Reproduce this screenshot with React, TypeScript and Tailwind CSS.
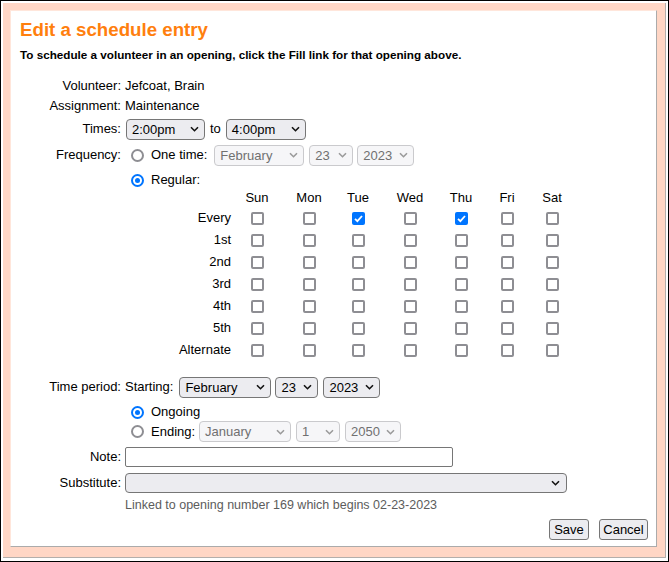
import React from "react";

const Chevron = ({ disabled }: { disabled?: boolean }) => (
  <svg width="9" height="6" viewBox="0 0 9 6" className="shrink-0">
    <path d="M1 1.2 L4.5 4.7 L8 1.2" fill="none" stroke={disabled ? "#9a9a9a" : "#111"} strokeWidth="1.6" />
  </svg>
);

function Select({ value, className, disabled }: { value: string; className: string; disabled?: boolean }) {
  return (
    <div
      className={
        "flex h-[21px] shrink-0 items-center justify-between rounded-[4px] border pl-[5px] pr-[5px] text-[13px] leading-none " +
        (disabled ? "border-[#cacacd] bg-[#f6f6f8] text-[#707070] " : "border-[#767676] bg-[#ececf0] text-black ") +
        className
      }
    >
      <span>{value}</span>
      <Chevron disabled={disabled} />
    </div>
  );
}

function Checkbox({ checked }: { checked?: boolean }) {
  if (checked)
    return (
      <span className="flex h-[13px] w-[13px] items-center justify-center rounded-[2px] bg-[#0075ff]">
        <svg width="11" height="11" viewBox="0 0 11 11">
          <path d="M2 5.8 L4.4 8.1 L9 3" fill="none" stroke="#fff" strokeWidth="1.8" />
        </svg>
      </span>
    );
  return <span className="block h-[13px] w-[13px] rounded-[2px] border-2 border-[#8e8e93]" />;
}

function Radio({ checked }: { checked?: boolean }) {
  if (checked)
    return (
      <span className="flex h-[13px] w-[13px] shrink-0 items-center justify-center rounded-full border-2 border-[#0075ff]">
        <span className="h-[5px] w-[5px] rounded-full bg-[#0075ff]" />
      </span>
    );
  return <span className="block h-[13px] w-[13px] shrink-0 rounded-full border-2 border-[#8e8e93]" />;
}

function Label({ children }: { children: React.ReactNode }) {
  return <div className="w-[101px] shrink-0 text-right">{children}</div>;
}

const days = ["Sun", "Mon", "Tue", "Wed", "Thu", "Fri", "Sat"];
const rows = ["Every", "1st", "2nd", "3rd", "4th", "5th", "Alternate"];

export default function App() {
  return (
    <div className="h-[562px] w-[669px] border border-black bg-white p-[2px] font-['Liberation_Sans',Arial,sans-serif] text-[13px] text-black">
      <div className="h-[555px] w-[663px] border-b border-r border-[#b3aeab] bg-[#ffd6c5] pl-[7px] pt-[7px]">
        <div className="flex h-[537px] w-[647px] flex-col border border-b-[#ababab] border-l-[#ffe6db] border-r-[#ababab] border-t-[#ffe6db] bg-white pl-[9px] pr-[8px] pt-[8px]">
          <div className="h-[22px] text-[18.7px] font-bold leading-[22px] text-[#ff7f0e]">Edit a schedule entry</div>
          <div className="mt-[5px] h-[17px] text-[11.7px] font-bold leading-[17px]">
            To schedule a volunteer in an opening, click the <b className="font-black">Fill</b> link for that opening above.
          </div>

          <div className="mt-[13px] flex h-[20px] items-center">
            <Label>Volunteer:</Label>
            <span className="ml-[4px]">Jefcoat, Brain</span>
          </div>
          <div className="flex h-[20px] items-center">
            <Label>Assignment:</Label>
            <span className="ml-[4px]">Maintenance</span>
          </div>

          <div className="mt-[2px] flex h-[22px] items-center">
            <Label>Times:</Label>
            <Select value="2:00pm" className="ml-[5px] w-[79px]" />
            <span className="mx-[5px]">to</span>
            <Select value="4:00pm" className="w-[80px]" />
          </div>

          <div className="mt-[4px] flex h-[22px] items-center">
            <Label>Frequency:</Label>
            <span className="ml-[10px]">
              <Radio />
            </span>
            <span className="ml-[7px]">One time:</span>
            <Select value="February" disabled className="ml-[7px] w-[90px]" />
            <Select value="23" disabled className="ml-[5px] w-[44px]" />
            <Select value="2023" disabled className="ml-[4px] w-[57px]" />
          </div>

          <div className="mt-[5px] flex h-[18px] items-center">
            <div className="w-[101px] shrink-0" />
            <span className="ml-[10px]">
              <Radio checked />
            </span>
            <span className="ml-[7px]">Regular:</span>
          </div>

          <div className="ml-[105px] grid grid-cols-[106px_52px_52px_46px_58px_44px_48px_42px] grid-rows-[18px_repeat(7,22px)] items-center">
            <div />
            {days.map((d) => (
              <div key={d} className="text-center">
                {d}
              </div>
            ))}
            {rows.map((r) => (
              <React.Fragment key={r}>
                <div className="text-right">{r}</div>
                {days.map((d) => (
                  <div key={d} className="flex justify-center">
                    <Checkbox checked={r === "Every" && (d === "Tue" || d === "Thu")} />
                  </div>
                ))}
              </React.Fragment>
            ))}
          </div>

          <div className="mt-[15px] flex h-[22px] items-center">
            <Label>Time period:</Label>
            <span className="ml-[4px]">Starting:</span>
            <Select value="February" className="ml-[6px] w-[92px]" />
            <Select value="23" className="ml-[4px] w-[43px]" />
            <Select value="2023" className="ml-[5px] w-[57px]" />
          </div>

          <div className="mt-[5px] flex h-[18px] items-center">
            <div className="w-[101px] shrink-0" />
            <span className="ml-[10px]">
              <Radio checked />
            </span>
            <span className="ml-[7px]">Ongoing</span>
          </div>
          <div className="flex h-[21px] items-center">
            <div className="w-[101px] shrink-0" />
            <span className="ml-[10px]">
              <Radio />
            </span>
            <span className="ml-[7px]">Ending:</span>
            <Select value="January" disabled className="ml-[4px] w-[92px]" />
            <Select value="1" disabled className="ml-[5px] w-[44px]" />
            <Select value="2050" disabled className="ml-[5px] w-[56px]" />
          </div>

          <div className="mt-[5px] flex h-[20px] items-center">
            <Label>Note:</Label>
            <div className="ml-[4px] h-[20px] w-[328px] rounded-[2px] border border-[#767676] bg-white" />
          </div>

          <div className="mt-[6px] flex h-[20px] items-center">
            <Label>Substitute:</Label>
            <Select value="" className="ml-[4px] !h-[20px] w-[442px] !pr-[6px]" />
          </div>

          <div className="mt-[4px] h-[17px] pl-[105px] text-[12.5px] leading-[17px] text-[#5c5c5c]">
            Linked to opening number 169 which begins 02-23-2023
          </div>

          <div className="mt-[5px] flex h-[21px] justify-end gap-[10px]">
            <button className="h-[21px] w-[40px] rounded-[3px] border border-[#767676] bg-[#ececf0] text-[13px] leading-none">
              Save
            </button>
            <button className="h-[21px] w-[49px] rounded-[3px] border border-[#767676] bg-[#ececf0] text-[13px] leading-none">
              Cancel
            </button>
          </div>
        </div>
      </div>
    </div>
  );
}
